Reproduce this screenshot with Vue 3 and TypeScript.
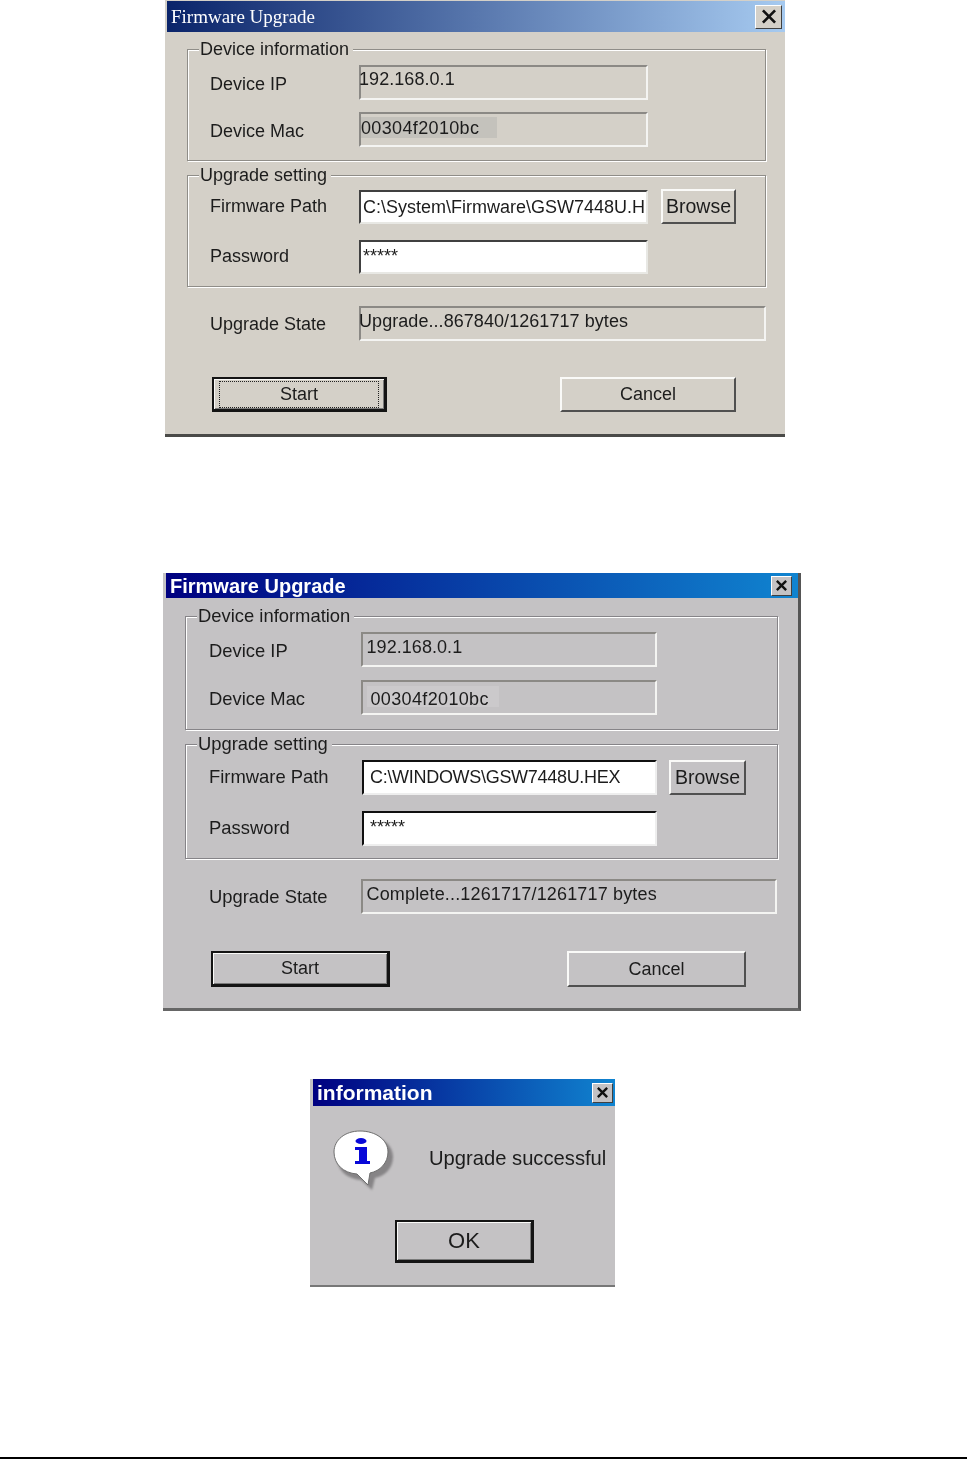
<script setup lang="ts">
interface FirmwareDialog {
  id: string
  path: string
  state: string
  focused: boolean
}

const dialogs: FirmwareDialog[] = [
  {
    id: 'old',
    path: 'C:\\System\\Firmware\\GSW7448U.H',
    state: 'Upgrade...867840/1261717 bytes',
    focused: true
  },
  {
    id: 'new',
    path: 'C:\\WINDOWS\\GSW7448U.HEX',
    state: 'Complete...1261717/1261717 bytes',
    focused: false
  }
]
</script>

<template>
  <div class="page">
    <section v-for="d in dialogs" :key="d.id" class="dlg" :class="`dlg--${d.id}`">
      <header class="title">
        <span class="title__text">Firmware Upgrade</span>
        <span class="close">
          <svg viewBox="0 0 16 14" class="close__x"><path d="M3 2 L13 12 M13 2 L3 12" /></svg>
        </span>
      </header>

      <div class="body">
        <div class="group group--info">
          <span class="group__legend">Device information</span>
          <div class="row">
            <span class="label">Device IP</span>
            <div class="field"><span class="field__text">192.168.0.1</span></div>
          </div>
          <div class="row">
            <span class="label">Device Mac</span>
            <div class="field"><span class="field__mark">00304f2010bc</span></div>
          </div>
        </div>

        <div class="group group--setting">
          <span class="group__legend">Upgrade setting</span>
          <div class="row">
            <span class="label">Firmware Path</span>
            <div class="input input--path">{{ d.path }}</div>
            <button class="btn btn--browse" type="button">Browse</button>
          </div>
          <div class="row">
            <span class="label">Password</span>
            <div class="input input--pass">*****</div>
          </div>
        </div>

        <div class="state">
          <span class="label">Upgrade State</span>
          <div class="field field--state"><span class="field__text">{{ d.state }}</span></div>
        </div>

        <div class="actions">
          <button class="btn btn--main btn--default" type="button">
            <span :class="{ focus: d.focused }">Start</span>
          </button>
          <button class="btn btn--main btn--cancel" type="button">Cancel</button>
        </div>
      </div>
    </section>

    <section class="dlg dlg--info">
      <header class="title">
        <span class="title__text">information</span>
        <span class="close">
          <svg viewBox="0 0 16 14" class="close__x"><path d="M3 2 L13 12 M13 2 L3 12" /></svg>
        </span>
      </header>
      <div class="message">
        <svg class="bubble" viewBox="0 0 62 60">
          <path class="bubble__shadow" d="M31 5 C47 5 60 14 60 27 C60 38 52 46 42 48 L39 60 L28 50 C14 49 4 40 4 27 C4 14 16 5 31 5 Z" />
          <path class="bubble__body" d="M27 1 C43 1 55 10 55 22 C55 33 47 41 37 43 L35 55 L24 44 C10 43 1 34 1 22 C1 10 12 1 27 1 Z" />
          <ellipse class="bubble__i" cx="28" cy="11" rx="5.5" ry="3" />
          <path class="bubble__i" d="M22 17 H34 V31 H37 V34 H22 V31 H26 V20 H22 Z" />
        </svg>
        <span class="message__text">Upgrade successful</span>
      </div>
      <button class="btn btn--ok btn--default" type="button">OK</button>
    </section>

    <div class="rule"></div>
  </div>
</template>

<style>
html, body { margin: 0; background: #fff; }
</style>

<style scoped>
.page {
  height: 1459px; display: flex; flex-direction: column; overflow: hidden;
  background: #fff; font-family: "Liberation Sans", Arial, sans-serif; color: #1c1c1c;
}
.dlg { box-sizing: border-box; flex: none; filter: blur(0.5px); }

.dlg--old {
  --bg: #d4d0c8; --title-h: 31px; --top-gap: 17px; --group-l: 20px; --group-w: 579px; --group-h: 112px;
  --line: #8f8d88; --text: 18px;
  --pad-l: 23px; --label-w: 149px; --field-w: 289px; --browse-w: 75px; --browse-gap: 13px;
  --info-gap: 12px; --setting-gap: 16px; --state-w: 407px; --state-gap: 19px;
  --action-gap: 36px; --btn-l: 47px; --btn-w: 175px; --cancel-w: 176px; --btn-h: 35px;
  --mark-pad: 0; --mark-w: 136px; --field-pad: 0px; --text-shift: -2px; --input-pad: 2px;
  width: 620px; height: 437px; margin-left: 165px; padding: 1px 0 0 2px;
  background: var(--bg); border-bottom: 3px solid #4a4a48;
}
.dlg--new {
  --bg: #c4c2c4; --title-h: 25px; --top-gap: 18px; --group-l: 19px; --group-w: 593px; --group-h: 114px;
  --line: #868488; --text: 18.4px;
  --pad-l: 24px; --label-w: 153px; --field-w: 295px; --browse-w: 77px; --browse-gap: 12px;
  --info-gap: 13px; --setting-gap: 16px; --state-w: 415px; --state-gap: 20px;
  --action-gap: 37px; --btn-l: 48px; --btn-w: 179px; --cancel-w: 179px; --btn-h: 36px;
  --mark-pad: 4px; --mark-w: 132px; --field-pad: 3.5px; --text-shift: 0px; --input-pad: 6px;
  width: 638px; height: 438px; margin: 136px 0 0 163px; padding: 0 0 0 3px;
  background: var(--bg); border-right: 3px solid #555; border-bottom: 3px solid #666;
}
.dlg--info {
  --bg: #c4c2c4;
  width: 305px; height: 208px; margin: 68px 0 0 310px; padding: 0 0 0 3px;
  background: var(--bg); border-bottom: 2px solid #777;
}

/* title bar */
.title {
  height: var(--title-h, 27px); display: flex; align-items: center; justify-content: space-between;
  box-sizing: border-box; padding: 0 2px 0 4px; color: #fff;
  background: linear-gradient(90deg, #000080, #1084d0);
}
.dlg--old .title { background: linear-gradient(90deg, #0a246a, #a6caf0); padding-right: 3px; }
.dlg--new .title { padding-right: 6px; }
.title__text { font-size: 20px; font-weight: 700; white-space: nowrap; }
.dlg--new .title__text { padding-top: 1px; }
.dlg--old .title__text { font-family: "Liberation Serif", serif; font-weight: 400; font-size: 19px; }
.dlg--info .title__text { font-size: 21px; }
.close {
  width: 21px; height: 20px; flex: none; display: flex; align-items: center; justify-content: center;
  box-sizing: border-box; background: var(--bg);
  border: 1px solid; border-color: #fff #404040 #404040 #fff;
}
.dlg--old .close { width: 27px; height: 24px; }
.close__x { width: 15px; height: 13px; fill: none; stroke: #111; stroke-width: 2.6; }
.dlg--old .close__x { width: 20px; height: 17px; stroke-width: 2.2; }

/* groups */
.group {
  position: relative; box-sizing: border-box; width: var(--group-w); height: var(--group-h);
  margin: 14px 0 0 var(--group-l); padding: 15px 0 0 calc(var(--pad-l) - 1px);
  display: flex; flex-direction: column;
  border: 1px solid var(--line);
  box-shadow: 1px 1px 0 #fff, inset 1px 1px 0 #fff;
}
.group--info { margin-top: var(--top-gap); gap: var(--info-gap); }
.group--setting { gap: var(--setting-gap); }
.dlg--old .group--setting { padding-top: 14px; }
.dlg--new .group--setting { height: 115px; }
.group__legend {
  position: absolute; left: 11px; top: -12px; padding: 0 4px 0 1px;
  background: var(--bg); font-size: var(--text); line-height: 22px; white-space: nowrap;
}
.row {
  height: 35px; display: grid; align-items: center;
  grid-template-columns: var(--label-w) var(--field-w) var(--browse-w);
}
.dlg--old .group--setting .row { height: 34px; }
.dlg--old .group--setting .input { height: 34px; }
.label { font-size: var(--text); line-height: 22px; white-space: nowrap; }
.group--info .label { padding-top: 2px; }
.group--setting .label { margin-top: -2px; }

/* read only and editable boxes */
.field {
  box-sizing: border-box; height: 35px; padding: 2px 0 0 var(--field-pad);
  border: 2px solid; border-color: #8b8985 #f4f4f2 #f4f4f2 #8b8985;
  font-size: 18px; line-height: 20px; white-space: nowrap;
}
.dlg--new .field { margin-left: -1px; padding-top: 3px; }
.dlg--old .field--state { padding-top: 3px; }
.field__text { display: block; margin-left: var(--text-shift); letter-spacing: 0.06px; }
.dlg--new .field--state .field__text { letter-spacing: 0.16px; }
.field__mark {
  display: block; box-sizing: border-box; width: var(--mark-w); height: 21px; margin-top: 1px;
  padding-left: var(--mark-pad); background: #c4c2bc; line-height: 22px; letter-spacing: 0.35px;
}
.dlg--new .field__mark { background: #cbc9cb; margin-top: 1px; line-height: 26px; }
.input {
  box-sizing: border-box; height: 35px; padding: 4px 0 0 var(--input-pad); overflow: hidden;
  background: #fff; border: 2px solid; border-color: #404040 #e8e8e4 #e8e8e4 #404040;
  font-size: 18px; line-height: 22px; white-space: nowrap;
}
.input--pass { padding-top: 3px; line-height: 22px; }
.dlg--new .input { border-color: #101010 #eee #eee #101010; }
.dlg--new .input--path { letter-spacing: -0.3px; }

/* buttons */
.btn {
  box-sizing: border-box; padding: 0; background: var(--bg); color: #1c1c1c; font: inherit;
  font-size: 18px; border: 2px solid; border-color: #fafaf8 #505050 #505050 #fafaf8;
}
.btn--browse {
  width: var(--browse-w); height: 35px; margin-left: var(--browse-gap); margin-top: -1px; font-size: 19.5px;
}
.btn--main { width: var(--btn-w); height: var(--btn-h); }
.btn--cancel { width: var(--cancel-w); margin-left: auto; }
.btn--default {
  border: 2px solid #141414; border-right-width: 3px; border-bottom-width: 3px;
  box-shadow: inset 1px 1px 0 #fafaf8, inset -1px -1px 0 #7a7a7a;
}
.btn--ok { display: block; width: 139px; height: 43px; margin: 30px 0 0 82px; font-size: 22px; }
.focus {
  display: block; box-sizing: border-box; margin: 0 5px; line-height: 24px; padding-bottom: 1px;
  border: 1px dotted #222;
}

/* state row and actions */
.state {
  display: grid; align-items: center; grid-template-columns: var(--label-w) var(--state-w);
  margin: var(--state-gap) 0 0 calc(var(--group-l) + var(--pad-l));
}
.actions {
  display: flex; margin: var(--action-gap) 0 0 calc(var(--btn-l) - 2px);
  width: 524px;
}
.dlg--new .actions { margin-left: 45px; width: 535px; }

/* information message */
.message { display: flex; align-items: center; gap: 34px; margin: 24px 0 0 20px; height: 60px; }
.bubble { width: 62px; height: 60px; flex: none; overflow: visible; }
.bubble__shadow { fill: #868486; filter: blur(1px); }
.bubble__body { fill: #fff; stroke: #6e6e6e; stroke-width: 1; }
.bubble__i { fill: #0808d8; }
.message__text { font-size: 20.2px; line-height: 24px; white-space: nowrap; margin-top: -4px; }

.rule { margin-top: auto; height: 2px; flex: none; background: #000; }
</style>
